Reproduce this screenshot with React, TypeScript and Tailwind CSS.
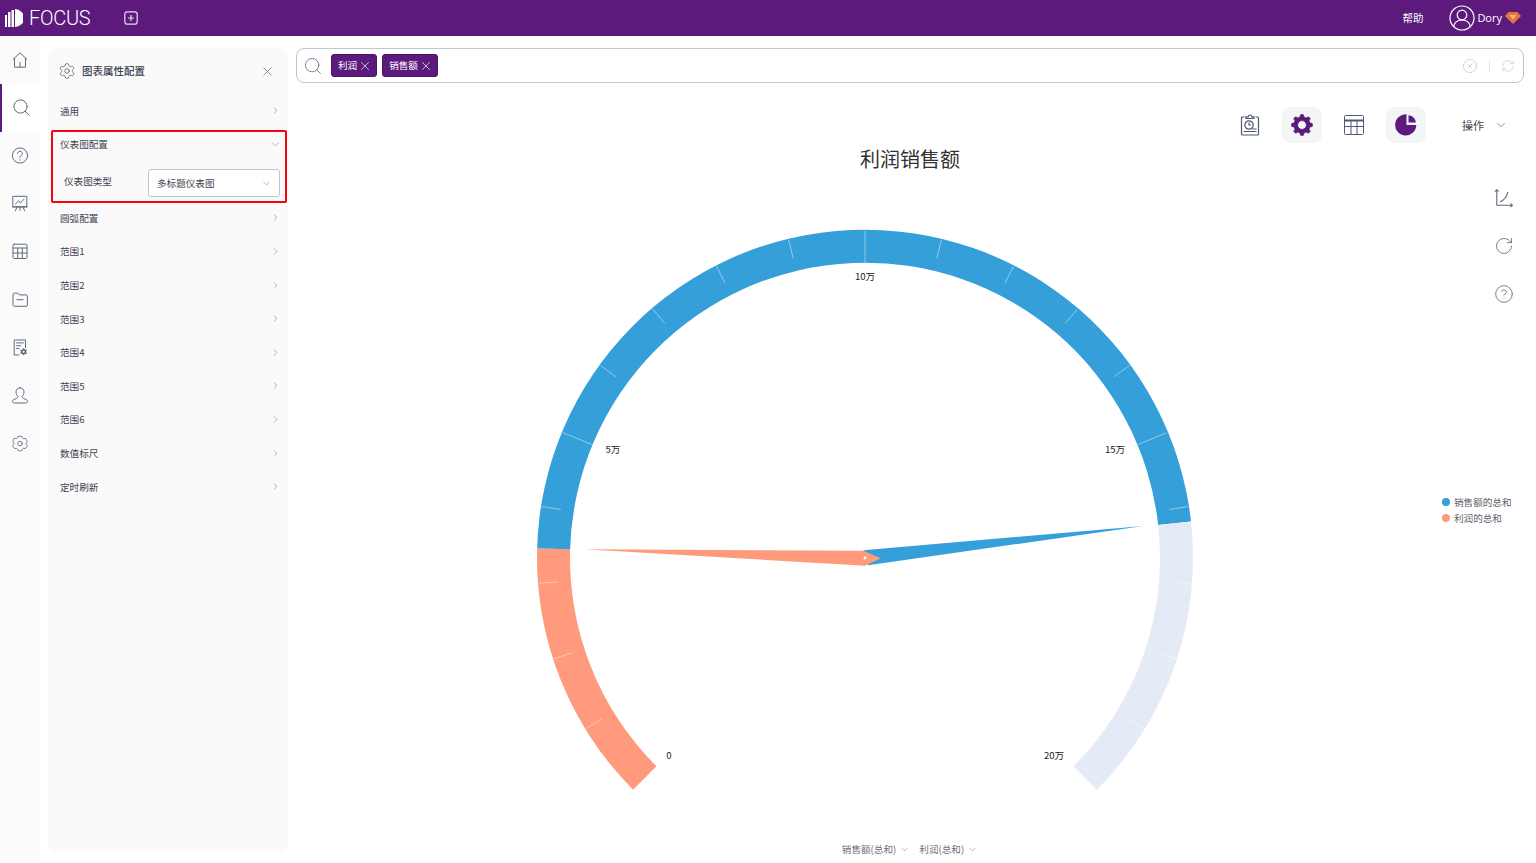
import React from 'react';
import { ChevronDown, ChevronRight, CircleHelp, CircleX, RefreshCw, RotateCw, Search, Settings, X } from 'lucide-react';

const FONT = '"Noto Sans CJK SC", "Noto Sans", sans-serif';

const CX = 865;
const CY = 557.7;
const R_OUT = 328;
const R_IN = 295;

const polar = (r: number, deg: number) => {
  const a = (deg * Math.PI) / 180;
  return [CX + r * Math.cos(a), CY - r * Math.sin(a)];
};

// band of the gauge between two angles, measured counter-clockwise from 3 o'clock
const bandPath = (from: number, to: number) => {
  const [x1, y1] = polar(R_OUT, from);
  const [x2, y2] = polar(R_OUT, to);
  const [x3, y3] = polar(R_IN, to);
  const [x4, y4] = polar(R_IN, from);
  const large = from - to > 180 ? 1 : 0;
  return `M${x1} ${y1}A${R_OUT} ${R_OUT} 0 ${large} 1 ${x2} ${y2}L${x3} ${y3}A${R_IN} ${R_IN} 0 ${large} 0 ${x4} ${y4}Z`;
};

const gearPoints = (cx: number, cy: number, outer: number, inner: number, teeth: number) => {
  const pts: string[] = [];
  const step = 360 / teeth;
  for (let i = 0; i < teeth; i++) {
    const c = i * step - 90;
    [[-0.3, inner], [-0.17, outer], [0.17, outer], [0.3, inner]].forEach(([f, r]) => {
      const a = ((c + f * step) * Math.PI) / 180;
      pts.push(`${cx + r * Math.cos(a)} ${cy + r * Math.sin(a)}`);
    });
  }
  return `M${pts.join('L')}Z`;
};

const TICKS = Array.from({ length: 21 }, (_, i) => i);

const Gauge = () => (
  <svg viewBox="296 172 1228 668" className="block w-full h-[668px] mt-px">
    <path d={bandPath(225, 178.36)} fill="#ff9b7c" />
    <path d={bandPath(178.36, 6.35)} fill="#349fd9" />
    <path d={bandPath(6.35, -45)} fill="#e4eaf6" />
    {TICKS.slice(1, 20).map(i => {
      const deg = 225 - i * 13.5;
      const [x1, y1] = polar(R_OUT - 1, deg);
      const [x2, y2] = polar(i % 5 === 0 ? R_IN : R_OUT - 20, deg);
      return <line key={i} x1={x1} y1={y1} x2={x2} y2={y2} stroke="#ffffff" strokeOpacity={0.45} strokeWidth={1} />;
    })}
    <polygon points="1143.3,526 863.3,550.3 868,565.2" fill="#349fd9" />
    <polygon points="584.3,549.3 863.5,550.7 880.7,558.3 865,565.7" fill="#ff9b7c" />
    <circle cx={CX} cy={CY} r={1.5} fill="#ffffff" />
    <g fontSize={9.6} fill="#222222" textAnchor="middle" dominantBaseline="central" fontFamily={FONT}>
      <text x={669} y={755}>0</text>
      <text x={613} y={449}>5万</text>
      <text x={865} y={276}>10万</text>
      <text x={1115} y={449}>15万</text>
      <text x={1054} y={755}>20万</text>
    </g>
  </svg>
);

const NavIcon = ({ children }: { children: React.ReactNode }) => (
  <svg width="20" height="20" viewBox="0 0 20 20" fill="none" stroke="#5f6b80" strokeWidth="1" strokeLinejoin="round" strokeLinecap="round">
    {children}
  </svg>
);

const NAV_ITEMS: React.ReactNode[] = [
  <><path d="M3 9.5 10 2.8l7 6.7" /><path d="M4.5 8.2v9h11v-9" /><path d="M10 12.5v4.7" /></>,
  <><circle cx="9.5" cy="8.500" r="6.6" /><path d="m14.2 13.3 4 4" /></>,
  <><circle cx="10" cy="9.500" r="7.6" /><path d="M7.6 7.500a2.4 2.4 0 1 1 3.6 2.1c-.8.5-1.2 1-1.2 2" /><path d="M10 13.800v.4" /></>,
  <><path d="M3.2 2.3h13.6v10.600H3.200z" /><path d="m5.500 10 3-3 2 1.800 3.500-3.600" /><path d="M2.800 12.900h14.400M7 12.900l-1.600 4M13 12.900l1.600 4M10 12.900v3.400" /></>,
  <><rect x="3" y="2.200" width="14" height="14.3" rx="1.2" /><path d="M3 6h14M3 11h14M7.700 6v10.500M12.300 6v10.500" /></>,
  <><path d="M3 4.700q0-1.600 1.400-1.600h3.400l1.600 1.800h6.600q1.400 0 1.400 1.400v8.600q0 1.400-1.400 1.400H4.400Q3 16.300 3 14.900z" /><path d="M6.800 9.700h6.400" /></>,
  <><path d="M9 17H4.200V2h11.300v7.500" /><path d="M6.500 4.900h6.800M6.500 7.700h4M6.500 10.500h2.400" /><path d={gearPoints(13.6, 13.7, 3.6, 2.6, 6)} fill="#5f6b80" stroke="none" /><circle cx="13.6" cy="13.7" r="1" fill="#fbfbfc" stroke="none" /></>,
  <><path d="M10 1.800c-2.600 0-4 2-4 4.300 0 1.900.8 3.300 1.900 4.200.2 1-.4 1.700-1.500 2.200-1.700.6-4 1.300-4 2.800 0 1.100 1 1.700 2.400 1.700h10.400c1.400 0 2.400-.6 2.400-1.700 0-1.500-2.300-2.200-4-2.800-1.100-.5-1.700-1.200-1.500-2.200C13.200 9.400 14 8 14 6.100c0-2.300-1.400-4.300-4-4.300Z" /></>,
  <g transform="translate(1.500 0.500) scale(.85)"><path d="m8 2 4 0 .9 2.100 1.500.9 2.200-.4 2 3.400-1.400 1.700v1.800l1.400 1.700-2 3.400-2.200-.4-1.500.9-.9 2.100H8l-.9-2.100-1.500-.9-2.200.4-2-3.400 1.400-1.700V9.500L1.400 7.800l2-3.400 2.200.4 1.500-.9z" /><circle cx="10" cy="10.600" r="2.700" /></g>,
];

const Rail = () => (
  <aside className="w-10 shrink-0 bg-[#fbfbfc] flex flex-col">
    {NAV_ITEMS.map((icon, i) => (
      <div
        key={i}
        className={
          i === 1
            ? 'h-12 flex items-center justify-center bg-white border-l-2 border-[#5c1a7c]'
            : 'h-12 flex items-center justify-center'
        }
      >
        <NavIcon>{icon}</NavIcon>
      </div>
    ))}
  </aside>
);

const CONFIG_ROWS = ['圆弧配置', '范围1', '范围2', '范围3', '范围4', '范围5', '范围6', '数值标尺', '定时刷新'];

const ConfigRow = ({ label, open }: { label: string; open?: boolean }) => (
  <div className="h-[33.6px] pl-3 pr-[7.500px] flex items-center justify-between text-[9.6px] text-[#3f4450]">
    <span>{label}</span>
    {open ? (
      <ChevronDown size={11} strokeWidth={1.300} className="text-[#7b8494]" />
    ) : (
      <ChevronRight size={11} strokeWidth={1.300} className="text-[#7b8494]" />
    )}
  </div>
);

const ConfigPanel = () => (
  <section className="relative w-60 shrink-0 ml-2 mt-3 mb-[11px] rounded-lg bg-[#fafafb]">
    <div className="h-[46px] pl-[10px] pr-[13px] flex items-center justify-between">
      <div className="flex items-center gap-[6px] text-[10.5px] font-medium text-[#3c4250]">
        <Settings size={18} strokeWidth={1} className="text-[#4d5562]" />
        <span>图表属性配置</span>
      </div>
      <X size={15} strokeWidth={1.100} className="text-[#5f6675]" />
    </div>
    <ConfigRow label="通用" />
    <ConfigRow label="仪表图配置" open />
    <div className="h-10 pl-4 pr-2 flex items-center justify-between text-[9.6px] text-[#3f4450]">
      <span>仪表图类型</span>
      <div className="w-[132px] h-7 mt-1 pl-2 pr-[7.500px] flex items-center justify-between rounded-[3px] bg-white border border-[#b9c4d6]">
        <span>多标题仪表图</span>
        <ChevronDown size={11} strokeWidth={1.300} className="text-[#7b8494]" />
      </div>
    </div>
    {CONFIG_ROWS.map(label => (
      <ConfigRow key={label} label={label} />
    ))}
    {/* highlight round the gauge settings */}
    <div className="absolute left-[3px] top-[82px] w-[236px] h-[73px] rounded-[2px] border-2 border-[#f5030f] pointer-events-none" />
  </section>
);

const Tag = ({ label }: { label: string }) => (
  <span className="h-[23px] px-[6px] flex items-center gap-[1px] rounded-[3px] bg-[#5c1a7c] border border-[#4b1368] text-[9.6px] text-white">
    {label}
    <X size={14} strokeWidth={1.2} className="-mr-[2px]" />
  </span>
);

const SearchBar = () => (
  <div className="h-[35px] pl-[6px] pr-[8px] flex items-center rounded-lg border border-[#b9c9da] bg-white">
    <Search size={20} strokeWidth={1} className="text-[#5f6b80] mr-[8px]" />
    <div className="flex gap-[5px]">
      <Tag label="利润" />
      <Tag label="销售额" />
    </div>
    <div className="ml-auto flex items-center">
      <CircleX size={16} strokeWidth={1} className="text-[#b9c4d0]" />
      <span className="w-px h-3 bg-[#dde3ea] mx-[11px]" />
      <RefreshCw size={14} strokeWidth={1} className="text-[#b9c4d0]" />
    </div>
  </div>
);

const Toolbar = () => (
  <div className="mt-6 h-9 pr-4 flex items-center justify-end">
    <div className="flex gap-3">
      <div className="w-10 h-9 flex items-center justify-center">
        <svg width="20" height="22" viewBox="0 0 20 22" fill="none" stroke="#4d5a72" strokeWidth="1.200">
          <path d="M4.500 3H2.500a1 1 0 0 0-1 1v16a1 1 0 0 0 1 1h15a1 1 0 0 0 1-1V4a1 1 0 0 0-1-1h-2" />
          <path d="M6 4.500V2.800h2.200a1.800 1.800 0 0 1 3.600 0H14v1.700z" />
          <circle cx="9" cy="11" r="4.200" />
          <path d="M9 8.500V11h2.200M3.500 17.500h13M12 15h4.500" />
        </svg>
      </div>
      <div className="w-10 h-9 flex items-center justify-center rounded-lg bg-[#f4f5f6]">
        <svg width="22" height="22" viewBox="0 0 22 22">
          <path
            fillRule="evenodd"
            fill="#5c1a7c"
            stroke="#5c1a7c"
            strokeWidth="0.800"
            strokeLinejoin="round"
            d={`${gearPoints(11, 11, 10.400, 8.200, 8)}M11 6.600a4.400 4.400 0 1 0 0 8.800 4.400 4.400 0 0 0 0-8.800Z`}
          />
        </svg>
      </div>
      <div className="w-10 h-9 flex items-center justify-center">
        <svg width="20" height="20" viewBox="0 0 20 20" fill="none" stroke="#4d5a72" strokeWidth="1">
          <rect x="0.500" y="0.500" width="19" height="19" rx="1" />
          <path d="M.5 5.500h19" strokeWidth="2" />
          <path d="M.5 11.500h19M7 5.500v14M13 5.500v14" />
        </svg>
      </div>
      <div className="w-10 h-9 flex items-center justify-center rounded-lg bg-[#f4f5f6]">
        <svg width="22" height="22" viewBox="0 0 22 22" fill="#5c1a7c">
          <path d="M11.500 .3A10.600 10.600 0 1 0 21.300 11H11.500z" />
          <path d="M13.500 1.200a8.800 8.800 0 0 1 7.400 7.300h-7.400z" />
        </svg>
      </div>
    </div>
    <span className="ml-9 text-[11px] text-[#3f4450]">操作</span>
    <ChevronDown size={14} strokeWidth={1.1} className="ml-[10px] text-[#4d5562]" />
  </div>
);

const LEGEND = [
  { label: '销售额的总和', dot: 'bg-[#349fd9]' },
  { label: '利润的总和', dot: 'bg-[#ff9b7c]' },
];

const ChartArea = () => (
  <div className="relative">
    <h2 className="mt-1 h-6 text-center text-[20px] leading-6 font-normal text-[#333333]">利润销售额</h2>
    <Gauge />
    <div className="h-[14px] mt-[2px] flex items-center justify-center gap-[9px] text-[9.6px] text-[#6b6f7a]">
      <span className="flex items-center gap-[3px]">
        销售额(总和)
        <ChevronDown size={11} strokeWidth={1.1} />
      </span>
      <span className="flex items-center gap-[3px]">
        利润(总和)
        <ChevronDown size={11} strokeWidth={1.1} />
      </span>
    </div>
    {/* tools beside the chart */}
    <div className="absolute right-[10px] top-[41px] flex flex-col gap-[28px] text-[#5f6b80]">
      <svg width="20" height="20" viewBox="0 0 18 18" fill="none" stroke="#5f6b80" strokeWidth="1">
        <path d="M2.500 1.500v14h14" />
        <path d="M.8 3.200 2.500 1.500l1.700 1.700M14.800 13.800l1.700 1.700-1.700 1.700" />
        <path d="M5.500 12.500c3.500-1.500 6-4.500 7-9" />
      </svg>
      <RotateCw size={20} strokeWidth={1} />
      <CircleHelp size={20} strokeWidth={1} />
    </div>
    <div className="absolute left-[1146px] top-[348px] flex flex-col gap-[2px] text-[9.6px] leading-[14px] text-[#5a5f6b]">
      {LEGEND.map(item => (
        <div key={item.label} className="flex items-center gap-1">
          <span className={`w-2 h-2 rounded-full ${item.dot}`} />
          <span>{item.label}</span>
        </div>
      ))}
    </div>
  </div>
);

const Header = () => (
  <header className="h-9 shrink-0 pl-[5px] pr-[15px] flex items-center bg-[#5c1a7c] text-white">
    <svg width="18" height="18" viewBox="0 0 18 18" fill="#ffffff">
      <rect x="0" y="6" width="2" height="12" />
      <rect x="3" y="3" width="2.500" height="15" />
      <rect x="6.500" y="1" width="2.500" height="17" />
      <path d="M10 0a9 9 0 0 1 0 18z" />
    </svg>
    <span className="ml-[6px] text-[20px] tracking-[-0.3px] font-light" style={{ fontFamily: 'Roboto, sans-serif' }}>
      FOCUS
    </span>
    <svg width="14" height="14" viewBox="0 0 14 14" fill="none" stroke="#e7dcf0" strokeWidth="1.200" className="ml-[34px]">
      <rect x="0.800" y="0.800" width="12.400" height="12.400" rx="2.500" />
      <path d="M7 4v6M4 7h6" />
    </svg>
    <span className="ml-auto text-[10.500px]">帮助</span>
    <svg width="26" height="26" viewBox="0 0 26 26" fill="none" stroke="#ffffff" strokeWidth="1.200" className="ml-[26px]">
      <circle cx="13" cy="13" r="12" />
      <circle cx="13" cy="10" r="4.800" />
      <path d="M4.500 21.500c1-4 4-6.500 8.500-6.500s7.500 2.500 8.500 6.500" />
    </svg>
    <span className="ml-[2px] text-[11px]" style={{ fontFamily: '"Open Sans", sans-serif' }}>
      Dory
    </span>
    <svg width="16" height="12" viewBox="0 0 16 12" className="ml-[3px]">
      <path d="M3.500 0h9L16 4l-8 8-8-8z" fill="#e2763a" />
      <path d="M4.500 3h7L8 7.500z" fill="#f4b98c" />
    </svg>
  </header>
);

export default function App() {
  return (
    <div className="h-screen w-full overflow-hidden flex flex-col bg-white" style={{ fontFamily: FONT }}>
      <Header />
      <div className="flex flex-1 min-h-0">
        <Rail />
        <ConfigPanel />
        <main className="flex-1 min-w-0 ml-2 mr-3 mt-3">
          <SearchBar />
          <Toolbar />
          <ChartArea />
        </main>
      </div>
    </div>
  );
}
